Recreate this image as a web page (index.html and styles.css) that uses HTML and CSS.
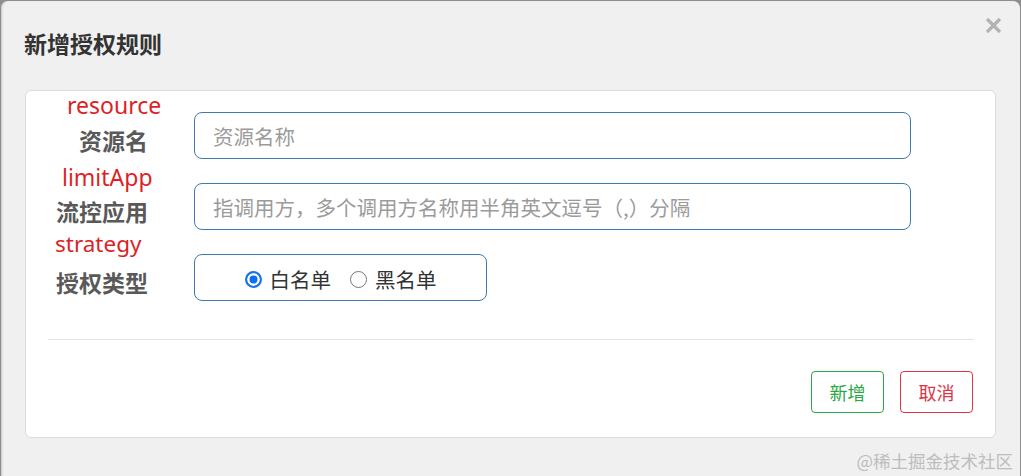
FILE: index.html
```html
<!DOCTYPE html>
<html lang="zh-CN">
<head>
<meta charset="utf-8">
<title>新增授权规则</title>
<link rel="stylesheet" href="styles.css">
</head>
<body>
<div class="modal">
  <div class="modal-header">
    <h2 class="modal-title">新增授权规则</h2>
    <button class="close" type="button" aria-label="关闭">
      <svg width="17" height="17" viewBox="0 0 17 17"><path d="M2 2 L15 15 M15 2 L2 15" stroke="#b3b3b3" stroke-width="3.2" stroke-linecap="butt" fill="none"/></svg>
    </button>
  </div>
  <div class="card">
    <form class="form">
      <div class="label">
        <span class="ann ann-resource">resource</span>
        <span class="label-text">资源名</span>
      </div>
      <input class="field" type="text" placeholder="资源名称">

      <div class="label">
        <span class="ann ann-limit">limitApp</span>
        <span class="label-text">流控应用</span>
      </div>
      <input class="field" type="text" placeholder="指调用方，多个调用方名称用半角英文逗号（,）分隔">

      <div class="label">
        <span class="ann ann-strategy">strategy</span>
        <span class="label-text">授权类型</span>
      </div>
      <div class="radio-group">
        <label class="radio"><span class="dot checked"></span><span class="radio-text">白名单</span></label>
        <label class="radio"><span class="dot"></span><span class="radio-text">黑名单</span></label>
      </div>
    </form>
    <div class="divider"></div>
    <div class="actions">
      <button class="btn btn-add" type="button">新增</button>
      <button class="btn btn-cancel" type="button">取消</button>
    </div>
  </div>
</div>
<div class="watermark">@稀土掘金技术社区</div>
</body>
</html>
```

FILE: styles.css
```css
* { box-sizing: border-box; }

html, body {
  margin: 0;
  height: 476px;
  overflow: hidden;
}

body {
  background: #8e8e8e;
  font-family: "Noto Sans", "Noto Sans CJK SC", sans-serif;
  position: relative;
}

.modal {
  margin: 1px 1px 0 1px;
  height: 490px;
  background: #f0f0f0;
  border-radius: 7px 7px 0 0;
  box-shadow: inset 2px 0 2px -1px #c4c4c4;
}

.modal-header {
  height: 89px;
  display: flex;
  justify-content: space-between;
  align-items: center;
  padding: 0 18px 6px 23px;
}

.modal-title {
  margin: 0;
  font-family: "Noto Sans CJK SC", sans-serif;
  font-size: 23px;
  font-weight: 700;
  line-height: 30px;
  color: #333;
}

.close {
  align-self: flex-start;
  margin-top: 16px;
  padding: 0;
  border: 0;
  background: transparent;
  width: 17px;
  height: 17px;
  display: flex;
}

.card {
  margin: 0 24px;
  height: 348px;
  background: #fff;
  border: 1px solid #dcdcdc;
  border-radius: 6px;
  padding: 21px 0 24px 0;
}

.form {
  display: grid;
  grid-template-columns: 122px 717px;
  grid-auto-rows: 47px;
  column-gap: 46px;
  row-gap: 24px;
}

.label {
  position: relative;
  display: flex;
  align-items: center;
  justify-content: flex-end;
  padding-top: 8px;
}

.label-text {
  font-family: "Noto Sans CJK SC", sans-serif;
  font-size: 23px;
  font-weight: 700;
  line-height: 24px;
  color: #595959;
}

.ann {
  position: absolute;
  font-family: "Noto Sans", sans-serif;
  font-size: 23px;
  line-height: 23px;
  color: #dd1f26;
  white-space: nowrap;
}

.ann-resource { left: 41px; top: -18px; }
.ann-limit { left: 36px; top: -17px; }
.ann-strategy { left: 29px; top: -22px; font-size: 22.5px; }

.field {
  width: 717px;
  height: 47px;
  border: 1px solid #3d7ab0;
  border-radius: 8px;
  padding: 0 18px;
  font-family: "Noto Sans CJK SC", sans-serif;
  font-size: 20.5px;
  color: #333;
  background: #fff;
  outline: none;
}

.field::placeholder {
  color: #9b9b9b;
}

.radio-group {
  width: 293px;
  height: 47px;
  border: 1px solid #3d7ab0;
  border-radius: 8px;
  display: flex;
  align-items: center;
  justify-content: center;
  gap: 19px;
  padding-top: 3px;
}

.radio {
  display: flex;
  align-items: center;
  gap: 8px;
}

.dot {
  width: 17px;
  height: 17px;
  border-radius: 50%;
  border: 1.5px solid #767676;
  background: #fff;
}

.dot.checked {
  border: 2px solid #1a73e8;
  background: #0b6ff5;
  box-shadow: inset 0 0 0 2.5px #fff;
}

.radio-text {
  font-family: "Noto Sans CJK SC", sans-serif;
  font-size: 20.5px;
  line-height: 24px;
  color: #333;
}

.divider {
  height: 1px;
  background: #e4e4e4;
  margin: 38px 21px 0 22px;
}

.actions {
  display: flex;
  justify-content: flex-end;
  gap: 16px;
  margin: 31px 22px 0 0;
}

.btn {
  width: 73px;
  height: 42px;
  border-radius: 4px;
  background: #fff;
  font-family: "Noto Sans CJK SC", sans-serif;
  font-size: 18px;
  padding: 0;
}

.btn-add {
  border: 1px solid #28a745;
  color: #28a745;
}

.btn-cancel {
  border: 1px solid #dc3545;
  color: #dc3545;
}

.watermark {
  position: absolute;
  right: 8px;
  bottom: 3px;
  font-family: "Noto Sans CJK SC", sans-serif;
  font-size: 17.5px;
  line-height: 24px;
  color: #bdbdbd;
}
```
